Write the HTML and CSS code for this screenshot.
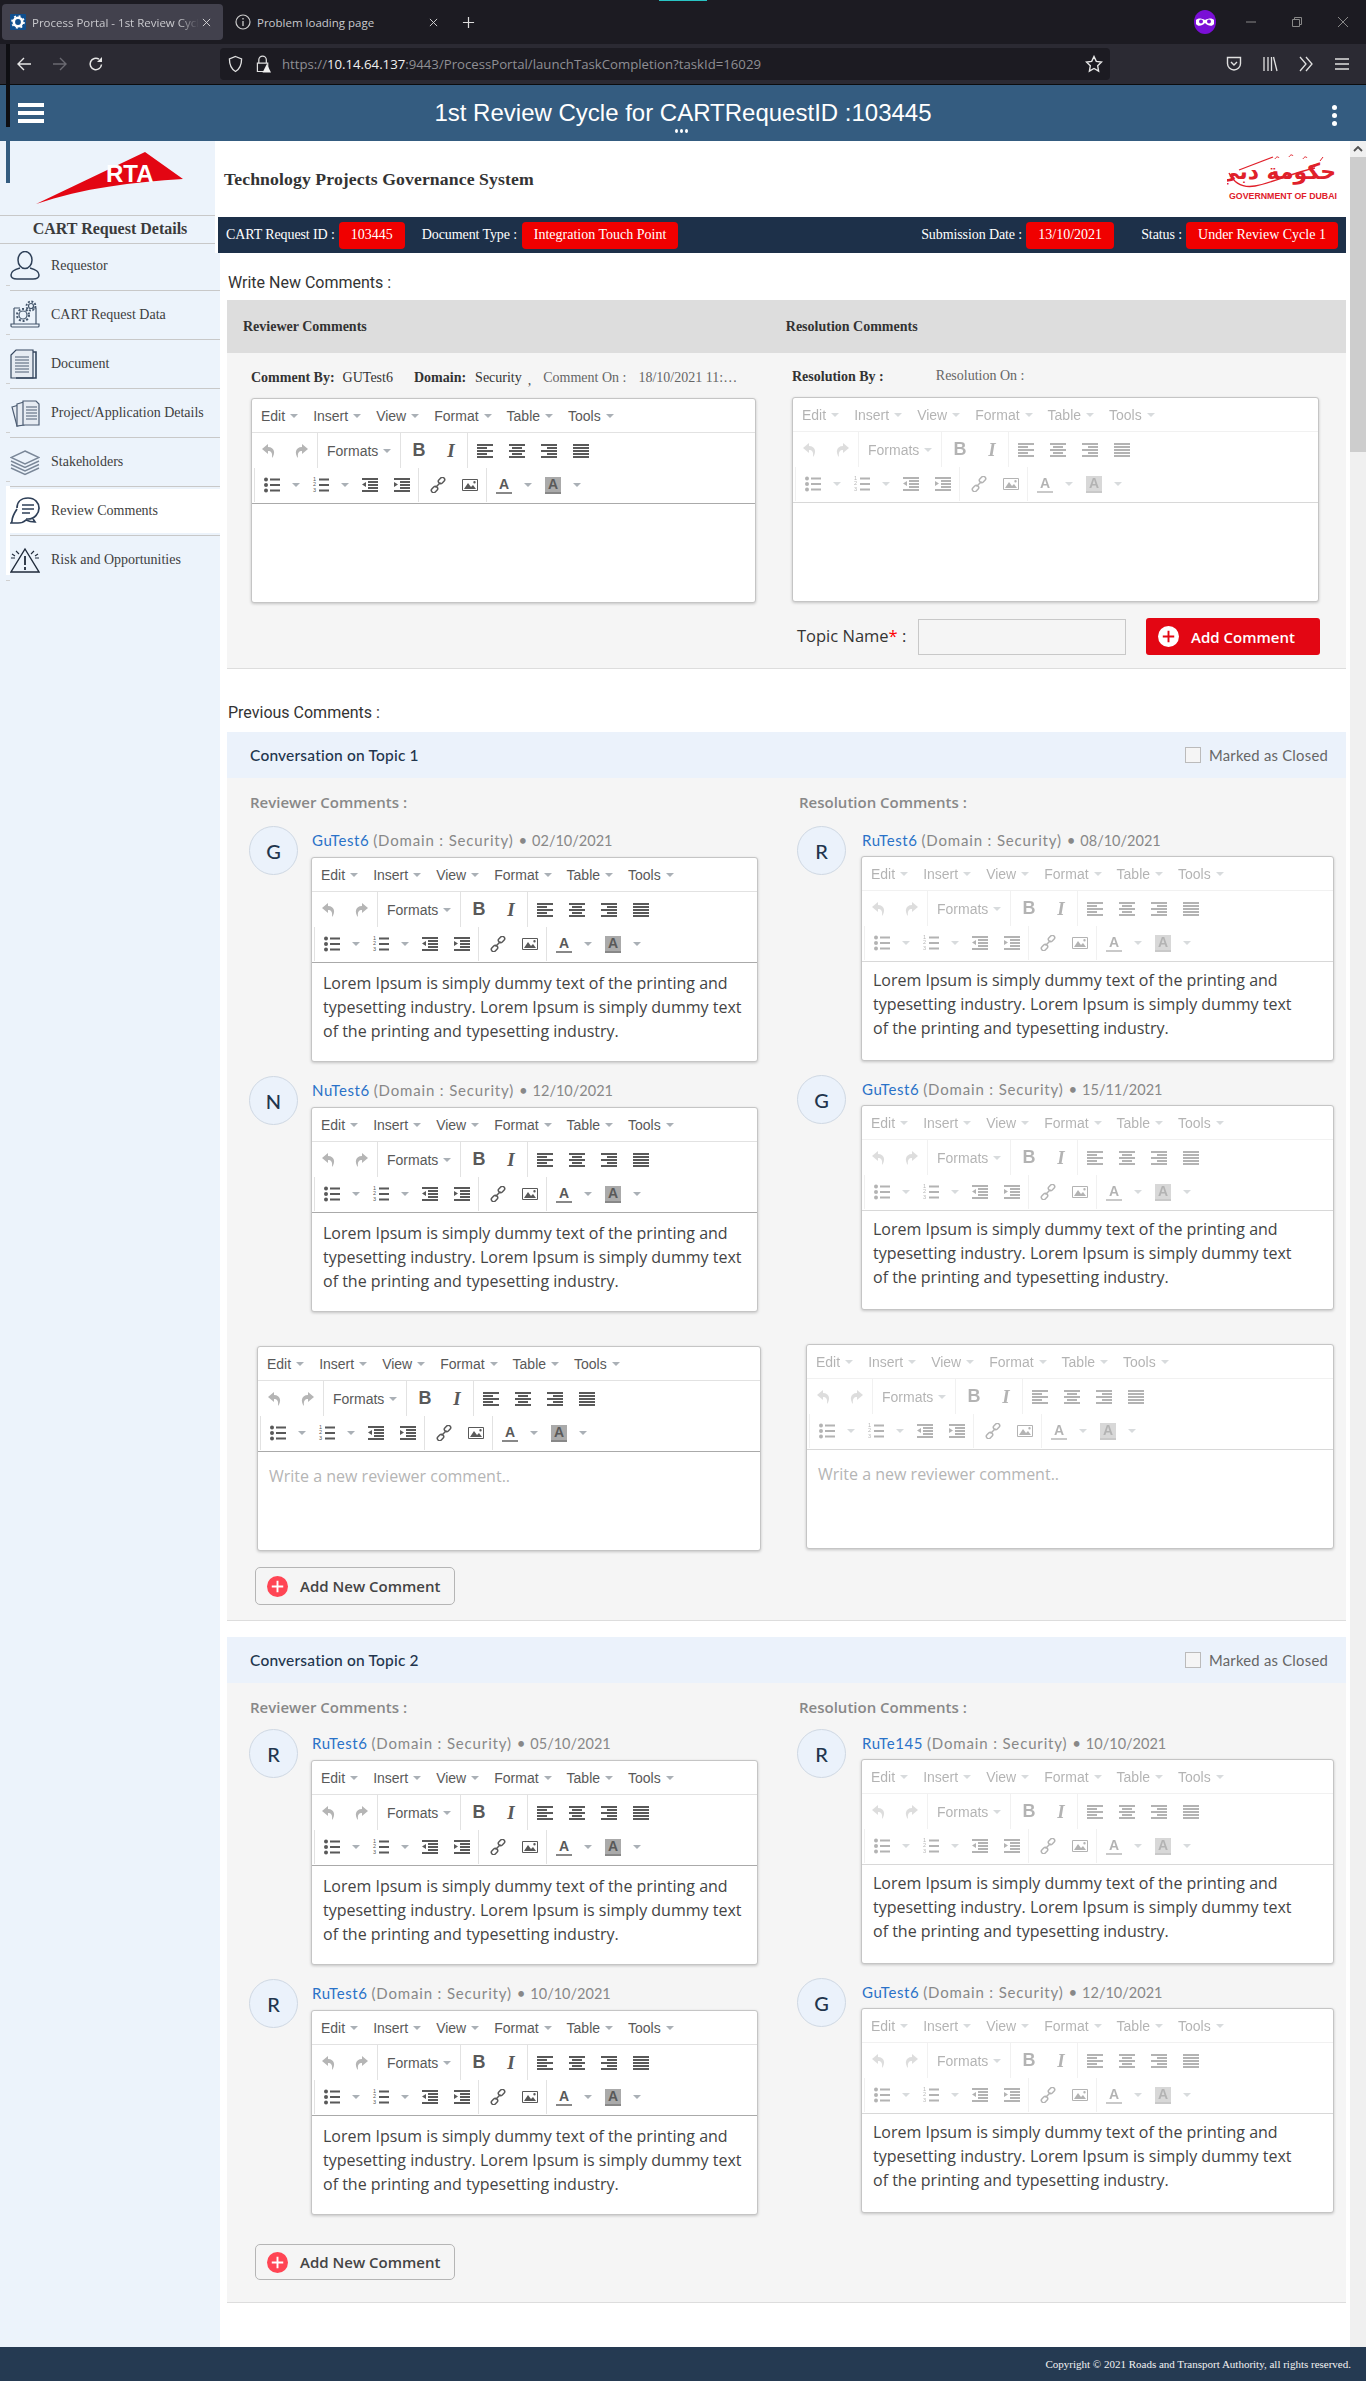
FILE: index.html

```html
<!DOCTYPE html>
<html>
<head>
	<title>1st Review Cycle</title>
	<link rel="stylesheet" href="styles.css">
	<script src="script.js" defer></script>
</head>
<body>

<!-- shared icons -->
<svg class="icon-defs" width="0" height="0">
	<symbol id="i-undo" viewBox="0 0 16 16"><path d="M7 4V1L1 6l6 5V8c3 0 4.600 1.500 4 7 3.500-4 3-11-4-11z" fill="currentColor"/></symbol>
	<symbol id="i-redo" viewBox="0 0 16 16"><path d="M9 4V1l6 5-6 5V8c-3 0-4.600 1.500-4 7-3.500-4-3-11 4-11z" fill="currentColor"/></symbol>
	<symbol id="i-left" viewBox="0 0 16 16"><path d="M0 1h16v2H0zM0 4h10v2H0zM0 7h16v2H0zM0 10h10v2H0zM0 13h16v2H0z" fill="currentColor"/></symbol>
	<symbol id="i-center" viewBox="0 0 16 16"><path d="M0 1h16v2H0zM3 4h10v2H3zM0 7h16v2H0zM3 10h10v2H3zM0 13h16v2H0z" fill="currentColor"/></symbol>
	<symbol id="i-right" viewBox="0 0 16 16"><path d="M0 1h16v2H0zM6 4h10v2H6zM0 7h16v2H0zM6 10h10v2H6zM0 13h16v2H0z" fill="currentColor"/></symbol>
	<symbol id="i-justify" viewBox="0 0 16 16"><path d="M0 1h16v2H0zM0 4h16v2H0zM0 7h16v2H0zM0 10h16v2H0zM0 13h16v2H0z" fill="currentColor"/></symbol>
	<symbol id="i-bullets" viewBox="0 0 16 16"><g fill="currentColor"><circle cx="2" cy="2.500" r="2"/><circle cx="2" cy="8" r="2"/><circle cx="2" cy="13.500" r="2"/><path d="M6 1.500h10v2H6zM6 7h10v2H6zM6 12.500h10v2H6z"/></g></symbol>
	<symbol id="i-numbers" viewBox="0 0 10 16"><path d="M0 1.500h10v2H0zM0 7h10v2H0zM0 12.500h10v2H0z" fill="currentColor"/></symbol>
	<symbol id="i-outdent" viewBox="0 0 16 16"><path d="M0 1h16v2H0zM6 4h10v2H6zM6 7h10v2H6zM6 10h10v2H6zM0 13h16v2H0zM4 5v5L0 7.500z" fill="currentColor"/></symbol>
	<symbol id="i-indent" viewBox="0 0 16 16"><path d="M0 1h16v2H0zM6 4h10v2H6zM6 7h10v2H6zM6 10h10v2H6zM0 13h16v2H0zM0 5v5l4-2.500z" fill="currentColor"/></symbol>
	<symbol id="i-link" viewBox="0 0 16 16"><g fill="none" stroke="currentColor" stroke-width="1.500"><rect x="8" y="1.200" width="7" height="4.600" rx="2.300" transform="rotate(-45 11.500 3.500)"/><rect x="1" y="10.200" width="7" height="4.600" rx="2.300" transform="rotate(-45 4.500 12.500)"/><path d="M5.500 10.500l5-5"/></g></symbol>
	<symbol id="i-image" viewBox="0 0 16 16"><path d="M.5 2.500h15v11H.5z" fill="none" stroke="currentColor"/><path d="M2 12l4-6 3 4 2-2 3 4z M12.500 4a1.200 1.200 0 1 1 0 2.400 1.200 1.200 0 0 1 0-2.400z" fill="currentColor"/></symbol>
	<symbol id="i-plus" viewBox="0 0 22 22"><path d="M10 5h2v5h5v2h-5v5h-2v-5H5v-2h5z" fill="currentColor"/></symbol>
</svg>

<!-- one editor toolbar, script.js puts a copy into every editor -->
<template id="editorBars">
	<div class="mce-menu">
		<span class="mce-mi">Edit<i class="caret"></i></span>
		<span class="mce-mi">Insert<i class="caret"></i></span>
		<span class="mce-mi">View<i class="caret"></i></span>
		<span class="mce-mi">Format<i class="caret"></i></span>
		<span class="mce-mi">Table<i class="caret"></i></span>
		<span class="mce-mi">Tools<i class="caret"></i></span>
	</div>
	<div class="mce-row mce-row1">
		<div class="mce-group group-history">
			<span class="mce-btn dim"><svg><use href="#i-undo"/></svg></span>
			<span class="mce-btn dim"><svg><use href="#i-redo"/></svg></span>
		</div>
		<div class="mce-group group-formats"><span class="mce-formats">Formats<i class="caret"></i></span></div>
		<div class="mce-group group-style">
			<span class="mce-btn letter-b">B</span>
			<span class="mce-btn letter-i">I</span>
		</div>
		<div class="mce-group group-last group-align">
			<span class="mce-btn"><svg><use href="#i-left"/></svg></span>
			<span class="mce-btn"><svg><use href="#i-center"/></svg></span>
			<span class="mce-btn"><svg><use href="#i-right"/></svg></span>
			<span class="mce-btn"><svg><use href="#i-justify"/></svg></span>
		</div>
	</div>
	<div class="mce-row mce-row2">
		<div class="mce-group group-lists">
			<span class="mce-btn"><svg><use href="#i-bullets"/></svg></span><span class="mce-drop"><i class="caret"></i></span>
			<span class="mce-btn"><span class="nums">1<br>2<br>3</span><svg class="nums-lines"><use href="#i-numbers"/></svg></span><span class="mce-drop"><i class="caret"></i></span>
			<span class="mce-btn"><svg><use href="#i-outdent"/></svg></span>
			<span class="mce-btn"><svg><use href="#i-indent"/></svg></span>
		</div>
		<div class="mce-group group-insert">
			<span class="mce-btn"><svg><use href="#i-link"/></svg></span>
			<span class="mce-btn"><svg><use href="#i-image"/></svg></span>
		</div>
		<div class="mce-group group-last group-color">
			<span class="mce-btn"><span class="letter-a">A</span></span><span class="mce-drop"><i class="caret"></i></span>
			<span class="mce-btn"><span class="letter-a shaded">A</span></span><span class="mce-drop"><i class="caret"></i></span>
		</div>
	</div>
</template>

<!-- browser -->
<div class="tabbar">
	<div class="tab tab-active">
		<svg class="favicon" viewBox="0 0 16 16"><rect width="16" height="16" rx="1" fill="#0f4f8f"/><circle cx="8" cy="8" r="4.200" fill="none" stroke="#fff" stroke-width="2.600"/><circle cx="8" cy="8" r="6" fill="none" stroke="#fff" stroke-width="1.600" stroke-dasharray="2 2.700"/></svg>
		<span class="tab-title">Process Portal - 1st Review Cycl</span>
		<svg class="tab-x" viewBox="0 0 10 10"><path d="M1 1l8 8M9 1l-8 8" stroke="#ddd" stroke-width="1"/></svg>
	</div>
	<div class="tab tab-other">
		<svg class="tab-info" viewBox="0 0 16 16"><circle cx="8" cy="8" r="7" fill="none" stroke="#ccc" stroke-width="1.200"/><path d="M8 7v5M8 4v1.500" stroke="#ccc" stroke-width="1.300"/></svg>
		<span class="tab-title">Problem loading page</span>
		<svg class="tab-x" viewBox="0 0 10 10"><path d="M1 1l8 8M9 1l-8 8" stroke="#ddd" stroke-width="1"/></svg>
	</div>
	<svg class="tab-new" viewBox="0 0 14 14"><path d="M7 1v12M1 7h12" stroke="#ddd" stroke-width="1.300"/></svg>
	<div class="teal-line"></div>
	<div class="win-tools">
		<svg class="mask" viewBox="0 0 22 24"><ellipse cx="11" cy="12" rx="11" ry="12" fill="#7a0fd6"/><path d="M2 10c2-2 5-2 9 0 4-2 7-2 9 0v4c-2 3-6 2-9-1-3 3-7 4-9 1z" fill="#fff"/><circle cx="7" cy="11.500" r="2" fill="#7a0fd6"/><circle cx="15" cy="11.500" r="2" fill="#7a0fd6"/></svg>
		<svg class="win-btn" viewBox="0 0 12 12"><path d="M1 6h10" stroke="#888" stroke-width="1"/></svg>
		<svg class="win-btn" viewBox="0 0 12 12"><path d="M1.500 3.500h7v7h-7zM3.500 3.500v-2h7v7h-2" fill="none" stroke="#888" stroke-width="1"/></svg>
		<svg class="win-btn" viewBox="0 0 12 12"><path d="M1 1l10 10M11 1L1 11" stroke="#888" stroke-width="1"/></svg>
	</div>
</div>

<div class="navbar">
	<div class="nav-arrows">
		<svg viewBox="0 0 16 16"><path d="M15 8H2M8 2L2 8l6 6" fill="none" stroke="#e6e6e6" stroke-width="1.400"/></svg>
		<svg viewBox="0 0 16 16"><path d="M1 8h13M8 2l6 6-6 6" fill="none" stroke="#6b6a72" stroke-width="1.400"/></svg>
		<svg viewBox="0 0 16 16"><path d="M13.500 8.500A5.700 5.700 0 1 1 11 3.200" fill="none" stroke="#e6e6e6" stroke-width="1.500"/><path d="M14 1v5H9z" fill="#e6e6e6"/></svg>
	</div>
	<div class="urlbar">
		<svg class="url-shield" viewBox="0 0 16 18"><path d="M8 1l6.500 2.500c0 6-1 10.500-6.500 13.500C2.500 14 1.500 9.500 1.500 3.500z" fill="none" stroke="#e0e0e0" stroke-width="1.400"/></svg>
		<svg class="url-lock" viewBox="0 0 16 20"><path d="M3 9V5.500a4 4 0 0 1 8 0V9M1.500 9h11v9h-11z" fill="none" stroke="#e0e0e0" stroke-width="1.300"/><path d="M11.500 10l4.500 9H7z" fill="#eee"/></svg>
		<span class="url-text">https://<b>10.14.64.137</b>:9443/ProcessPortal/launchTaskCompletion?taskId=16029</span>
		<svg class="url-star" viewBox="0 0 18 18"><path d="M9 1.500l2.300 4.900 5.200.7-3.800 3.700.9 5.300L9 13.500l-4.600 2.600.9-5.300L1.500 7.100l5.200-.7z" fill="none" stroke="#e6e6e6" stroke-width="1.400"/></svg>
	</div>
	<div class="nav-tools">
		<svg viewBox="0 0 16 18"><path d="M1.500 2.500h13v6a6.500 6.500 0 0 1-13 0z" fill="none" stroke="#e0e0e0" stroke-width="1.400"/><path d="M5 7l3 3 3-3" fill="none" stroke="#e0e0e0" stroke-width="1.400"/></svg>
		<svg viewBox="0 0 16 18"><path d="M2 2v14M6 2v14M9.500 2v14M11.500 2l3.500 14" fill="none" stroke="#e0e0e0" stroke-width="1.300"/></svg>
		<svg viewBox="0 0 16 18"><path d="M2 2l6 7-6 7M8 2l6 7-6 7" fill="none" stroke="#e0e0e0" stroke-width="1.300"/></svg>
		<svg viewBox="0 0 16 18"><path d="M1 4h14M1 9h14M1 14h14" stroke="#e0e0e0" stroke-width="1.500"/></svg>
	</div>
</div>

<!-- portal header -->
<header class="app-header">
	<div class="burger"><i></i><i></i><i></i></div>
	<h1 class="app-title">1st Review Cycle for CARTRequestID :103445</h1>
	<div class="kebab"><i></i><i></i><i></i></div>
	<div class="more-dots"><i></i><i></i><i></i></div>
</header>

<div class="page">

	<aside class="sidebar">
		<div class="logo-box">
			<svg class="rta-logo" viewBox="0 0 215 74" width="215" height="74">
				<path d="M36 63L145 11l38 27c-50 3-100 9-147 25z" fill="#e30613"/>
				<text x="106" y="41" font-family="Liberation Sans" font-weight="700" font-size="24" fill="#fff">RTA</text>
			</svg>
		</div>
		<h2 class="side-title">CART Request Details</h2>
		<ul class="side-menu">
			<li class="side-first">
				<svg viewBox="0 0 30 30"><g fill="none" stroke="#2f4058" stroke-width="1.500"><ellipse cx="15" cy="9" rx="7" ry="8.500"/><path d="M10 17c-4 1-9 3-9 7 0 3 3 4 6 4h16c3 0 6-1 6-4 0-4-5-6-9-7"/></g></svg>
				Requestor
			</li>
			<li>
				<svg viewBox="0 0 30 30"><g fill="none" stroke="#44566c" stroke-width="1.200"><path d="M4 8h6M22 8h4v16H4V8M1 24h28v2c0 .5-.5 1-1 1H2c-.5 0-1-.5-1-1z"/><circle cx="13" cy="15" r="4"/><circle cx="13" cy="15" r="6" stroke-dasharray="2 1.800" stroke-width="2"/><circle cx="21" cy="6" r="2.500"/><circle cx="21" cy="6" r="4.500" stroke-dasharray="2 1.500" stroke-width="1.800"/></g></svg>
				CART Request Data
			</li>
			<li>
				<svg viewBox="0 0 30 30"><path d="M6 1h17v28H1V6z" fill="#e6ebf2" stroke="#34465e" stroke-width="1.200"/><path d="M23 3h3v26H6" fill="none" stroke="#34465e" stroke-width="1.600"/><path d="M5 8h14M5 11h14M5 14h14M5 17h14M5 20h14M5 23h14" stroke="#4d5d73" stroke-width="1"/></svg>
				Document
			</li>
			<li>
				<svg viewBox="0 0 30 30"><g stroke="#4d5d73" fill="#e6ebf2" stroke-width="1.200"><path d="M2 9l7-2 4 19-6 2z"/><path d="M7 6l7-2v23l-7 1z"/><path d="M13 3h13l3 3v21H13z"/></g><path d="M16 9h11M16 12h11M16 15h11M16 18h11M16 21h11" stroke="#4d5d73" stroke-width="1"/></svg>
				Project/Application Details
			</li>
			<li>
				<svg viewBox="0 0 30 30"><g fill="none" stroke="#7a8798" stroke-width="1.400"><path d="M15 4L29 10.500 15 17 1 10.500z"/><path d="M1 14l14 6.500L29 14M1 17.500L15 24l14-6.500M1 21l14 6.500L29 21"/></g></svg>
				Stakeholders
			</li>
			<li class="side-active">
				<svg viewBox="0 0 30 30"><g fill="none" stroke="#2f4058" stroke-width="1.700"><path d="M7 12C7 6 11 2 18 2s11 5 11 10-4 11-11 11h-2"/><path d="M7 13c-2 3-5 8-5 12 0 1-1 2-1 2h7c3 0 6-1 8-3 0 0 4 2 9 2l-2-3"/><path d="M12 9h12M12 13h12M12 17h8"/></g></svg>
				Review Comments
			</li>
			<li class="side-last">
				<svg viewBox="0 0 30 30"><g fill="none" stroke="#1f2a3a" stroke-width="1.400"><path d="M15 4L29 27H1z"/><path d="M15 11v9M15 22v3" stroke-width="1.800"/><path d="M6 6l3 3M1 13h4M2 9l3 2M24 6l-3 3M29 13h-4M28 9l-3 2" stroke-width="1.100"/></g></svg>
				Risk and Opportunities
			</li>
		</ul>
	</aside>

	<main class="content">
		<div class="title-row">
			<div class="system-name">Technology Projects Governance System</div>
			<div class="dubai-logo">
				<svg viewBox="0 0 110 36" width="110" height="36">
					<g fill="none" stroke="#e0202a">
						<path d="M2 20c5 10 14 15 26 13 14-2 40-14 60-18" stroke-width="1.400"/>
						<path d="M12 17l34-13" stroke-width="1.300"/>
						<path d="M48 6c1-2 3-3 4-1M62 4c1-2 3-3 4-1M76 6c1-2 3-3 4-1M93 8l3-4" stroke-width="1"/>
					</g>
					<text x="109" y="26" text-anchor="end" font-family="DejaVu Sans" font-weight="700" font-size="22" fill="#e0202a">حكومة دبي</text>
				</svg>
				<span class="dubai-name">GOVERNMENT OF DUBAI</span>
			</div>
		</div>

		<div class="info-bar">
			<span class="info-label info-id">CART Request ID :</span>
			<span class="chip chip-id">103445</span>
			<span class="info-label info-doc">Document Type :</span>
			<span class="chip chip-doc">Integration Touch Point</span>
			<span class="info-label info-date">Submission Date :</span>
			<span class="chip chip-date">13/10/2021</span>
			<span class="info-label info-status">Status :</span>
			<span class="chip chip-status">Under Review Cycle 1</span>
		</div>

		<div class="section-label write-label">Write New Comments :</div>

		<div class="write-head">
			<span class="write-head-left">Reviewer Comments</span>
			<span class="write-head-right">Resolution Comments</span>
		</div>

		<div class="write-body">
			<div class="write-left">
				<div class="write-meta">
					<b>Comment By:</b><span class="m-user">GUTest6</span>
					<b class="m-dom-label">Domain:</b><span class="m-domain">Security</span>
					<span class="m-comma">,</span>
					<span class="m-on">Comment On :</span><span class="m-date">18/10/2021 11:…</span>
				</div>
				<div class="mce"><div class="mce-bars"></div><div class="mce-text"></div></div>
			</div>
			<div class="write-right">
				<div class="write-meta res-meta">
					<b>Resolution By :</b><span class="m-res-on">Resolution On :</span>
				</div>
				<div class="mce off"><div class="mce-bars"></div><div class="mce-text"></div></div>
				<div class="topic-line">
					<label class="topic-label">Topic Name<em>*</em> :</label>
					<input class="topic-input" type="text">
					<button class="btn-add"><span class="plus-white"><svg><use href="#i-plus"/></svg></span>Add Comment</button>
				</div>
			</div>
		</div>

		<div class="section-label prev-label">Previous Comments :</div>

		<!-- topic 1 -->
		<section class="topic">
			<div class="topic-bar">
				<span class="topic-name">Conversation on Topic 1</span>
				<label class="closed"><i class="check"></i>Marked as Closed</label>
			</div>
			<div class="topic-body">
				<div class="cols">
					<div class="col col-rev">
						<h3 class="col-head">Reviewer Comments :</h3>
						<div class="cmt">
							<div class="avatar">G</div>
							<div class="cmt-main">
								<div class="cmt-meta"><a class="who">GuTest6</a> <span class="dom">(Domain : Security)</span> <span class="dot">•</span> <span class="when">02/10/2021</span></div>
								<div class="mce"><div class="mce-bars"></div><div class="mce-text"><p>Lorem Ipsum is simply dummy text of the printing and typesetting industry. Lorem Ipsum is simply dummy text of the printing and typesetting industry.</p></div></div>
							</div>
						</div>
						<div class="cmt">
							<div class="avatar">N</div>
							<div class="cmt-main">
								<div class="cmt-meta"><a class="who">NuTest6</a> <span class="dom">(Domain : Security)</span> <span class="dot">•</span> <span class="when">12/10/2021</span></div>
								<div class="mce"><div class="mce-bars"></div><div class="mce-text"><p>Lorem Ipsum is simply dummy text of the printing and typesetting industry. Lorem Ipsum is simply dummy text of the printing and typesetting industry.</p></div></div>
							</div>
						</div>
						<div class="mce mce-new"><div class="mce-bars"></div><div class="mce-text"><p class="placeholder">Write a new reviewer comment..</p></div></div>
					</div>
					<div class="col col-res">
						<h3 class="col-head">Resolution Comments :</h3>
						<div class="cmt">
							<div class="avatar">R</div>
							<div class="cmt-main">
								<div class="cmt-meta"><a class="who">RuTest6</a> <span class="dom">(Domain : Security)</span> <span class="dot">•</span> <span class="when">08/10/2021</span></div>
								<div class="mce off"><div class="mce-bars"></div><div class="mce-text"><p>Lorem Ipsum is simply dummy text of the printing and typesetting industry. Lorem Ipsum is simply dummy text of the printing and typesetting industry.</p></div></div>
							</div>
						</div>
						<div class="cmt">
							<div class="avatar">G</div>
							<div class="cmt-main">
								<div class="cmt-meta"><a class="who">GuTest6</a> <span class="dom">(Domain : Security)</span> <span class="dot">•</span> <span class="when">15/11/2021</span></div>
								<div class="mce off"><div class="mce-bars"></div><div class="mce-text"><p>Lorem Ipsum is simply dummy text of the printing and typesetting industry. Lorem Ipsum is simply dummy text of the printing and typesetting industry.</p></div></div>
							</div>
						</div>
						<div class="mce mce-new off"><div class="mce-bars"></div><div class="mce-text"><p class="placeholder">Write a new reviewer comment..</p></div></div>
					</div>
				</div>
				<button class="btn-new"><span class="plus-red"><svg><use href="#i-plus"/></svg></span>Add New Comment</button>
			</div>
		</section>

		<!-- topic 2 -->
		<section class="topic topic-two">
			<div class="topic-bar">
				<span class="topic-name">Conversation on Topic 2</span>
				<label class="closed"><i class="check"></i>Marked as Closed</label>
			</div>
			<div class="topic-body">
				<div class="cols">
					<div class="col col-rev">
						<h3 class="col-head">Reviewer Comments :</h3>
						<div class="cmt">
							<div class="avatar">R</div>
							<div class="cmt-main">
								<div class="cmt-meta"><a class="who">RuTest6</a> <span class="dom">(Domain : Security)</span> <span class="dot">•</span> <span class="when">05/10/2021</span></div>
								<div class="mce"><div class="mce-bars"></div><div class="mce-text"><p>Lorem Ipsum is simply dummy text of the printing and typesetting industry. Lorem Ipsum is simply dummy text of the printing and typesetting industry.</p></div></div>
							</div>
						</div>
						<div class="cmt">
							<div class="avatar">R</div>
							<div class="cmt-main">
								<div class="cmt-meta"><a class="who">RuTest6</a> <span class="dom">(Domain : Security)</span> <span class="dot">•</span> <span class="when">10/10/2021</span></div>
								<div class="mce"><div class="mce-bars"></div><div class="mce-text"><p>Lorem Ipsum is simply dummy text of the printing and typesetting industry. Lorem Ipsum is simply dummy text of the printing and typesetting industry.</p></div></div>
							</div>
						</div>
					</div>
					<div class="col col-res">
						<h3 class="col-head">Resolution Comments :</h3>
						<div class="cmt">
							<div class="avatar">R</div>
							<div class="cmt-main">
								<div class="cmt-meta"><a class="who">RuTe145</a> <span class="dom">(Domain : Security)</span> <span class="dot">•</span> <span class="when">10/10/2021</span></div>
								<div class="mce off"><div class="mce-bars"></div><div class="mce-text"><p>Lorem Ipsum is simply dummy text of the printing and typesetting industry. Lorem Ipsum is simply dummy text of the printing and typesetting industry.</p></div></div>
							</div>
						</div>
						<div class="cmt">
							<div class="avatar">G</div>
							<div class="cmt-main">
								<div class="cmt-meta"><a class="who">GuTest6</a> <span class="dom">(Domain : Security)</span> <span class="dot">•</span> <span class="when">12/10/2021</span></div>
								<div class="mce off"><div class="mce-bars"></div><div class="mce-text"><p>Lorem Ipsum is simply dummy text of the printing and typesetting industry. Lorem Ipsum is simply dummy text of the printing and typesetting industry.</p></div></div>
							</div>
						</div>
					</div>
				</div>
				<button class="btn-new"><span class="plus-red"><svg><use href="#i-plus"/></svg></span>Add New Comment</button>
			</div>
		</section>
	</main>

	<div class="scrollbar">
		<div class="scroll-up"><svg viewBox="0 0 10 6" width="10" height="6"><path d="M1 5l4-4 4 4" fill="none" stroke="#505050" stroke-width="1.800"/></svg></div>
		<div class="scroll-thumb"></div>
	</div>
</div>

<footer class="app-footer">Copyright © 2021 Roads and Transport Authority, all rights reserved.</footer>

<div class="edge edge-dark"></div>
<div class="edge edge-blue"></div>
<div class="edge edge-white"></div>

</body>
</html>
```

FILE: styles.css

```css
* {
	box-sizing: border-box;
}

html, body {
	margin: 0;
	padding: 0;
}

body {
	position: relative;
	width: 1366px;
	height: 2381px;
	overflow: hidden;
	background-color: #fff;
	font-family: "Liberation Serif", serif;
	color: #333;
}

.icon-defs {
	position: absolute;
}

/* browser tabs */
.tabbar {
	position: relative;
	display: flex;
	align-items: center;
	height: 44px;
	background-color: #1c1b22;
	font-family: "Open Sans", sans-serif;
	font-size: 11.5px;
	color: #c9c9cd;
}

.tab {
	display: flex;
	align-items: center;
	height: 36px;
	border-radius: 4px;
}

.tab-active {
	width: 221px;
	margin-left: 2px;
	padding-left: 8px;
	background-color: #42414d;
}

.tab-active .tab-title {
	width: 167px;
	margin-left: 6px;
	white-space: nowrap;
	-webkit-mask-image: linear-gradient(to right, #000 88%, transparent);
	mask-image: linear-gradient(to right, #000 88%, transparent);
}

.favicon {
	width: 16px;
	height: 16px;
}

.tab-x {
	width: 9px;
	height: 9px;
	margin-left: 3px;
}

.tab-other {
	width: 225px;
	margin-left: 10px;
}

.tab-info {
	width: 16px;
	height: 16px;
	margin-left: 2px;
}

.tab-other .tab-title {
	width: 170px;
	margin-left: 6px;
	white-space: nowrap;
}

.tab-other .tab-x {
	margin-left: 2px;
}

.tab-new {
	width: 13px;
	height: 13px;
	margin-left: 4px;
}

.teal-line {
	position: absolute;
	left: 659px;
	top: 0;
	width: 48px;
	height: 1px;
	background-color: #29c4c4;
}

.win-tools {
	display: flex;
	align-items: center;
	margin-left: auto;
	padding-right: 17px;
}

.mask {
	width: 22px;
	height: 24px;
	margin-right: 29px;
}

.win-btn {
	width: 12px;
	height: 12px;
	margin-right: 34px;
}

.win-btn:last-child {
	margin-right: 0;
}

/* browser toolbar */
.navbar {
	display: flex;
	align-items: center;
	height: 41px;
	padding-bottom: 1px;
	background-color: #2b2a33;
	border-bottom: 1px solid #0c0c0d;
}

.nav-arrows {
	display: flex;
	gap: 20px;
	width: 220px;
	padding-left: 16px;
}

.nav-arrows svg {
	width: 16px;
	height: 16px;
}

.urlbar {
	display: flex;
	align-items: center;
	width: 890px;
	height: 32px;
	padding: 0 8px;
	background-color: #1c1b22;
	border-radius: 4px;
}

.url-shield {
	width: 15px;
	height: 18px;
}

.url-lock {
	width: 15px;
	height: 20px;
	margin-left: 13px;
}

.url-text {
	margin-left: 11px;
	font-family: "Open Sans", sans-serif;
	font-size: 13.2px;
	color: #8f8f94;
	white-space: nowrap;
}

.url-text b {
	font-weight: 400;
	color: #f0f0f0;
}

.url-star {
	width: 18px;
	height: 18px;
	margin-left: auto;
	margin-right: -1px;
}

.nav-tools {
	display: flex;
	gap: 20px;
	margin-left: 116px;
}

.nav-tools svg {
	width: 16px;
	height: 18px;
}

/* portal header */
.app-header {
	position: relative;
	display: flex;
	align-items: center;
	justify-content: center;
	height: 56px;
	background-color: #345c80;
	color: #fff;
}

.burger {
	position: absolute;
	left: 18px;
	top: 18px;
}

.burger i {
	display: block;
	width: 26px;
	height: 4px;
	margin-bottom: 4px;
	background-color: #fff;
}

.app-title {
	margin: 0 0 1px;
	font-family: "Liberation Sans", sans-serif;
	font-size: 24px;
	font-weight: 400;
}

.kebab {
	position: absolute;
	right: 29px;
	top: 20px;
}

.kebab i {
	display: block;
	width: 5px;
	height: 5px;
	margin-bottom: 3px;
	border-radius: 50%;
	background-color: #fff;
}

.more-dots {
	position: absolute;
	left: 675px;
	top: 44px;
	display: flex;
	gap: 2px;
}

.more-dots i {
	width: 3px;
	height: 4px;
	background-color: #fff;
	border-radius: 50%;
}

/* page */
.page {
	display: flex;
	height: 2206px;
}

.sidebar {
	width: 220px;
	flex: none;
	background: linear-gradient(#ecf3fb, #ecf3fb) 0 0 / 215px 112px no-repeat,
		linear-gradient(#ecf3fb, #ecf3fb) 0 112px / 220px 100% no-repeat;
}

.logo-box {
	width: 215px;
	height: 75px;
	border-bottom: 1px solid #c8c8c8;
}

.rta-logo {
	display: block;
}

.side-title {
	width: 215px;
	height: 28px;
	margin: 0;
	padding-left: 5px;
	border-bottom: 1px solid #c8c8c8;
	text-align: center;
	font-size: 16px;
	font-weight: 700;
	line-height: 26px;
	color: #3b3b3b;
}

.side-menu {
	width: 220px;
	margin: 0;
	padding: 0 0 0 10px;
	list-style: none;
}

.side-menu li {
	position: relative;
	display: flex;
	align-items: center;
	gap: 11px;
	height: 49px;
	border-bottom: 1px solid #c8c8c8;
	font-size: 14px;
	color: #3e3e3e;
}

.side-menu li:before {
	content: "";
	position: absolute;
	left: -4px;
	bottom: 4px;
	width: 4px;
	height: 1px;
	background-color: #d0d0d0;
}

.side-menu .side-first {
	height: 47px;
	padding-bottom: 2px;
}

.side-menu .side-active {
	padding: 2px 0;
	background: #fff content-box;
}

.side-menu .side-last {
	padding-bottom: 2px;
	border-bottom: 0;
}

.side-menu svg {
	width: 30px;
	height: 30px;
	flex: none;
}

.content {
	position: relative;
	width: 1130px;
	flex: none;
}

.title-row {
	display: flex;
	justify-content: space-between;
	align-items: center;
	height: 76px;
	padding: 0 13px 0 4px;
}

.system-name {
	font-size: 17.7px;
	font-weight: 700;
	letter-spacing: .1px;
	color: #333;
	margin-top: 1px;
}

.dubai-logo {
	display: flex;
	flex-direction: column;
	align-items: flex-end;
	align-self: flex-start;
	padding-top: 12px;
}

.dubai-name {
	font-family: "Liberation Sans", sans-serif;
	font-size: 8.8px;
	font-weight: 700;
	color: #e0202a;
	white-space: nowrap;
	margin-top: 2px;
}

.info-bar {
	display: flex;
	align-items: center;
	width: 1128px;
	height: 36px;
	margin-left: -2px;
	background-color: #1d3049;
	font-size: 14px;
	color: #fff;
	white-space: nowrap;
}

.info-label {
	letter-spacing: -.1px;
}

.chip {
	display: flex;
	align-items: center;
	justify-content: center;
	height: 27px;
	background-color: #f00000;
	border-radius: 4px;
}

.info-id { margin-left: 8px; }
.chip-id { width: 66px; margin-left: 4px; }
.info-doc { margin-left: 17px; }
.chip-doc { width: 156px; margin-left: 5px; }
.info-date { margin-left: auto; }
.chip-date { width: 88px; margin-left: 4px; }
.info-status { margin-left: 27px; }
.chip-status { width: 152px; margin-left: 4px; margin-right: 8px; }

.section-label {
	padding-left: 8px;
	font-family: "Roboto", sans-serif;
	font-size: 16px;
	color: #333;
}

.write-label {
	height: 47px;
	padding-top: 20px;
	line-height: 20px;
}

.write-head {
	display: flex;
	align-items: center;
	width: 1119px;
	height: 53px;
	margin-left: 7px;
	background-color: #ddd;
	font-size: 14px;
	font-weight: 700;
	color: #333;
}

.write-head-left {
	margin-left: 16px;
}

.write-head-right {
	margin-left: 419px;
}

.write-body {
	display: flex;
	width: 1119px;
	height: 316px;
	margin-left: 7px;
	background-color: #f5f5f5;
	border-bottom: 1px solid #ddd;
}

.write-left {
	width: 565px;
	padding-left: 24px;
}

.write-left .mce {
	width: 505px;
}

.write-right {
	width: 528px;
}

.write-right .mce {
	width: 527px;
}

.write-meta {
	display: flex;
	align-items: center;
	height: 45px;
	padding-top: 5px;
	font-size: 14px;
	color: #555;
	white-space: nowrap;
}

.write-meta b {
	color: #333;
}

.m-user { margin-left: 8px; color: #333; }
.m-dom-label { margin-left: 21px; }
.m-domain { margin-left: 9px; color: #333; }
.m-comma { margin-left: 6px; padding-top: 6px; }
.m-on { margin-left: 12px; color: #666; }
.m-date { margin-left: 12px; color: #666; }

.res-meta {
	height: 44px;
	padding-top: 4px;
}

.m-res-on {
	margin-left: 52px;
	color: #666;
	margin-top: -3px;
}

.topic-line {
	display: flex;
	align-items: center;
	margin-top: 16px;
}

.topic-label {
	margin: -3px 0 0 5px;
	width: 121px;
	font-family: "Open Sans", sans-serif;
	font-size: 16.5px;
	font-weight: 500;
	color: #333;
	white-space: nowrap;
}

.topic-label em {
	color: #f00;
	font-style: normal;
}

.topic-input {
	width: 208px;
	height: 36px;
	background-color: #f5f5f5;
	border: 1px solid #c8c8c8;
	outline: 0;
}

.btn-add {
	display: flex;
	align-items: center;
	width: 174px;
	height: 37px;
	margin-left: 20px;
	padding: 0 0 0 12px;
	background-color: #e30613;
	border: 0;
	border-radius: 3px;
	font-family: "Open Sans", sans-serif;
	font-size: 15px;
	font-weight: 600;
	color: #fff;
}

.plus-white, .plus-red {
	display: flex;
	width: 21px;
	height: 21px;
	border-radius: 50%;
}

.plus-white svg, .plus-red svg {
	width: 21px;
	height: 21px;
}

.plus-white {
	margin-right: 12px;
	background-color: #fff;
	color: #e30613;
}

.plus-red {
	margin-right: 12px;
	background-color: #ff4554;
	color: #fff;
}

.prev-label {
	height: 63px;
	padding-top: 34px;
	line-height: 20px;
}

/* topics */
.topic {
	width: 1119px;
	margin-left: 7px;
}

.topic-two {
	margin-top: 16px;
}

.topic-bar {
	display: flex;
	justify-content: space-between;
	align-items: center;
	height: 46px;
	padding: 0 18px 0 23px;
	background-color: #ebf2fb;
	font-family: "Lato", sans-serif;
}

.topic-name {
	font-size: 15.5px;
	font-weight: 500;
	letter-spacing: .2px;
	color: #22354d;
}

.closed {
	display: flex;
	align-items: center;
	font-size: 14.8px;
	letter-spacing: .25px;
	color: #666;
}

.check {
	width: 16px;
	height: 16px;
	margin-right: 8px;
	background-color: #f5f5f5;
	border: 1px solid #bbb;
}

.topic-body {
	background-color: #f5f5f5;
	border-bottom: 1px solid #ddd;
	padding-bottom: 15px;
}

.topic-two .topic-body {
	padding-bottom: 22px;
}

.cols {
	display: flex;
}

.col-rev {
	width: 570px;
	padding-left: 22px;
}

.col-res {
	width: 549px;
}

.col-res .cmt-meta {
	height: 30px;
}

.col-head {
	height: 48px;
	margin: 0;
	padding: 14px 0 0 1px;
	font-family: "Open Sans", sans-serif;
	font-size: 15px;
	font-weight: 600;
	line-height: 20px;
	color: #888;
}

.topic-two .col-head {
	height: 46px;
}

.col-res .col-head {
	padding-left: 2px;
}

.cmt {
	display: flex;
	margin-bottom: 14px;
}

.avatar {
	display: flex;
	align-items: center;
	justify-content: center;
	width: 49px;
	height: 49px;
	flex: none;
	border: 1px solid #cfd8e3;
	border-radius: 50%;
	background-color: #ebf2fb;
	font-family: "Lato", sans-serif;
	font-size: 20px;
	font-weight: 500;
	color: #22354d;
}

.cmt-main {
	margin-left: 13px;
}

.col-res .cmt-main {
	margin-left: 15px;
}

.cmt-meta {
	height: 31px;
	padding-top: 5px;
	font-family: "Lato", sans-serif;
	font-size: 15px;
	color: #888;
	white-space: nowrap;
}

.who {
	margin-left: 1px;
	letter-spacing: .6px;
	color: #2a72c8;
}

.dom {
	letter-spacing: .85px;
}

.when {
	font-size: 14.5px;
}

.dot {
	margin: 0 1px;
}

/* text editor */
.mce {
	width: 447px;
	height: 205px;
	background-color: #fff;
	border: 1px solid #c5c5c5;
	border-radius: 3px;
	box-shadow: 0 1px 3px rgba(0, 0, 0, .2);
}

.col-res .mce {
	width: 473px;
}

.col-rev .mce-new {
	width: 504px;
	margin: 34px 0 0 8px;
}

.col-res .mce-new {
	width: 528px;
	margin: 34px 0 0 9px;
}

.mce-bars {
	height: 105px;
	border-bottom: 1px solid #aaa;
	font-family: "Liberation Sans", sans-serif;
	color: #595959;
}

.mce.off .mce-bars {
	opacity: .45;
}

.mce-menu {
	display: flex;
	align-items: center;
	gap: 15px;
	height: 34px;
	padding-left: 9px;
	border-bottom: 1px solid #e2e2e2;
	font-size: 14px;
}

.mce-mi {
	display: flex;
	align-items: center;
}

.caret {
	display: inline-block;
	width: 0;
	height: 0;
	margin-left: 5px;
	border-top: 4px solid #aab0b6;
	border-left: 4px solid transparent;
	border-right: 4px solid transparent;
}

.mce-row {
	display: flex;
	height: 35px;
}

.mce-row2 {
	height: 34px;
	padding-left: 2px;
}

.mce-group {
	display: flex;
	align-items: center;
	border-right: 1px solid #e2e2e2;
}

.group-last {
	border-right: 0;
}

.group-history {
	width: 66px;
	padding-left: 1px;
}

.group-formats {
	width: 83px;
	padding-left: 9px;
}

.group-style {
	padding-left: 2px;
}

.group-align {
	padding-left: 1px;
}

.group-lists {
	padding-left: 1px;
	border-left: 1px solid #e2e2e2;
}

.group-insert {
	padding-left: 3px;
}

.group-color {
	padding-left: 1px;
}

.mce-formats {
	display: flex;
	align-items: center;
	font-size: 14px;
}

.mce-btn {
	display: flex;
	align-items: center;
	justify-content: center;
	width: 32px;
	height: 32px;
	flex: none;
}

.mce-btn svg {
	width: 16px;
	height: 16px;
}

.mce-btn .nums-lines {
	width: 10px;
}

.nums {
	width: 5px;
	margin-right: 1px;
	font-size: 5.5px;
	line-height: 5.5px;
}

.mce-btn.dim {
	color: #b5b5b5;
}

.mce-drop {
	display: flex;
	align-items: center;
	justify-content: center;
	width: 16px;
	margin-right: 1px;
}

.mce-drop .caret {
	margin-left: 0;
}

.letter-b {
	font-size: 18px;
	font-weight: 700;
}

.letter-i {
	font-family: "Liberation Serif", serif;
	font-size: 19px;
	font-style: italic;
	font-weight: 700;
}

.letter-a {
	display: block;
	width: 16px;
	height: 17px;
	border-bottom: 2px solid #888;
	text-align: center;
	font-size: 14px;
	font-weight: 700;
	line-height: 15px;
}

.letter-a.shaded {
	background-color: #aaa;
}

.mce-text {
	padding: 8px 11px 0;
	font-family: "Open Sans", sans-serif;
	font-size: 16px;
	line-height: 24px;
	color: #444;
}

.mce.off .mce-text {
	padding-top: 6px;
}

.mce-text p {
	max-width: 425px;
	margin: 0;
}

.mce-text .placeholder {
	max-width: none;
	padding-top: 4px;
	color: #b5b5b5;
}

.mce.off .placeholder {
	padding-top: 6px;
}

.btn-new {
	display: flex;
	align-items: center;
	width: 200px;
	height: 38px;
	margin: 16px 0 0 28px;
	padding: 0 0 0 11px;
	background-color: #f5f5f5;
	border: 1px solid #b5b5b5;
	border-radius: 5px;
	font-family: "Open Sans", sans-serif;
	font-size: 15px;
	font-weight: 600;
	color: #444;
}

.topic-two .btn-new {
	height: 36px;
	margin-top: 15px;
}

/* page scrollbar */
.scrollbar {
	width: 16px;
	flex: none;
	background-color: #f0f0f0;
}

.scroll-up {
	display: flex;
	align-items: center;
	justify-content: center;
	height: 16px;
}

.scroll-thumb {
	height: 295px;
	background-color: #cdcdcd;
}

.app-footer {
	height: 34px;
	padding-right: 15px;
	background-color: #253a52;
	text-align: right;
	font-size: 11px;
	line-height: 34px;
	color: #f2f2f2;
}

/* stray window edge left of the page */
.edge {
	position: absolute;
	left: 6px;
	width: 4px;
}

.edge-dark {
	top: 44px;
	height: 83px;
	background-color: #0e0e12;
}

.edge-blue {
	top: 141px;
	height: 42px;
	background-color: #345c80;
}

.edge-white {
	top: 486px;
	height: 89px;
	background-color: #fff;
}
```

FILE: script.js

```js
// Put a copy of the toolbar into every editor.
var bars = document.querySelectorAll(".mce-bars");
var template = document.getElementById("editorBars");

for (var i = 0; i < bars.length; i++) {
	bars[i].appendChild(template.content.cloneNode(true));
}
```
